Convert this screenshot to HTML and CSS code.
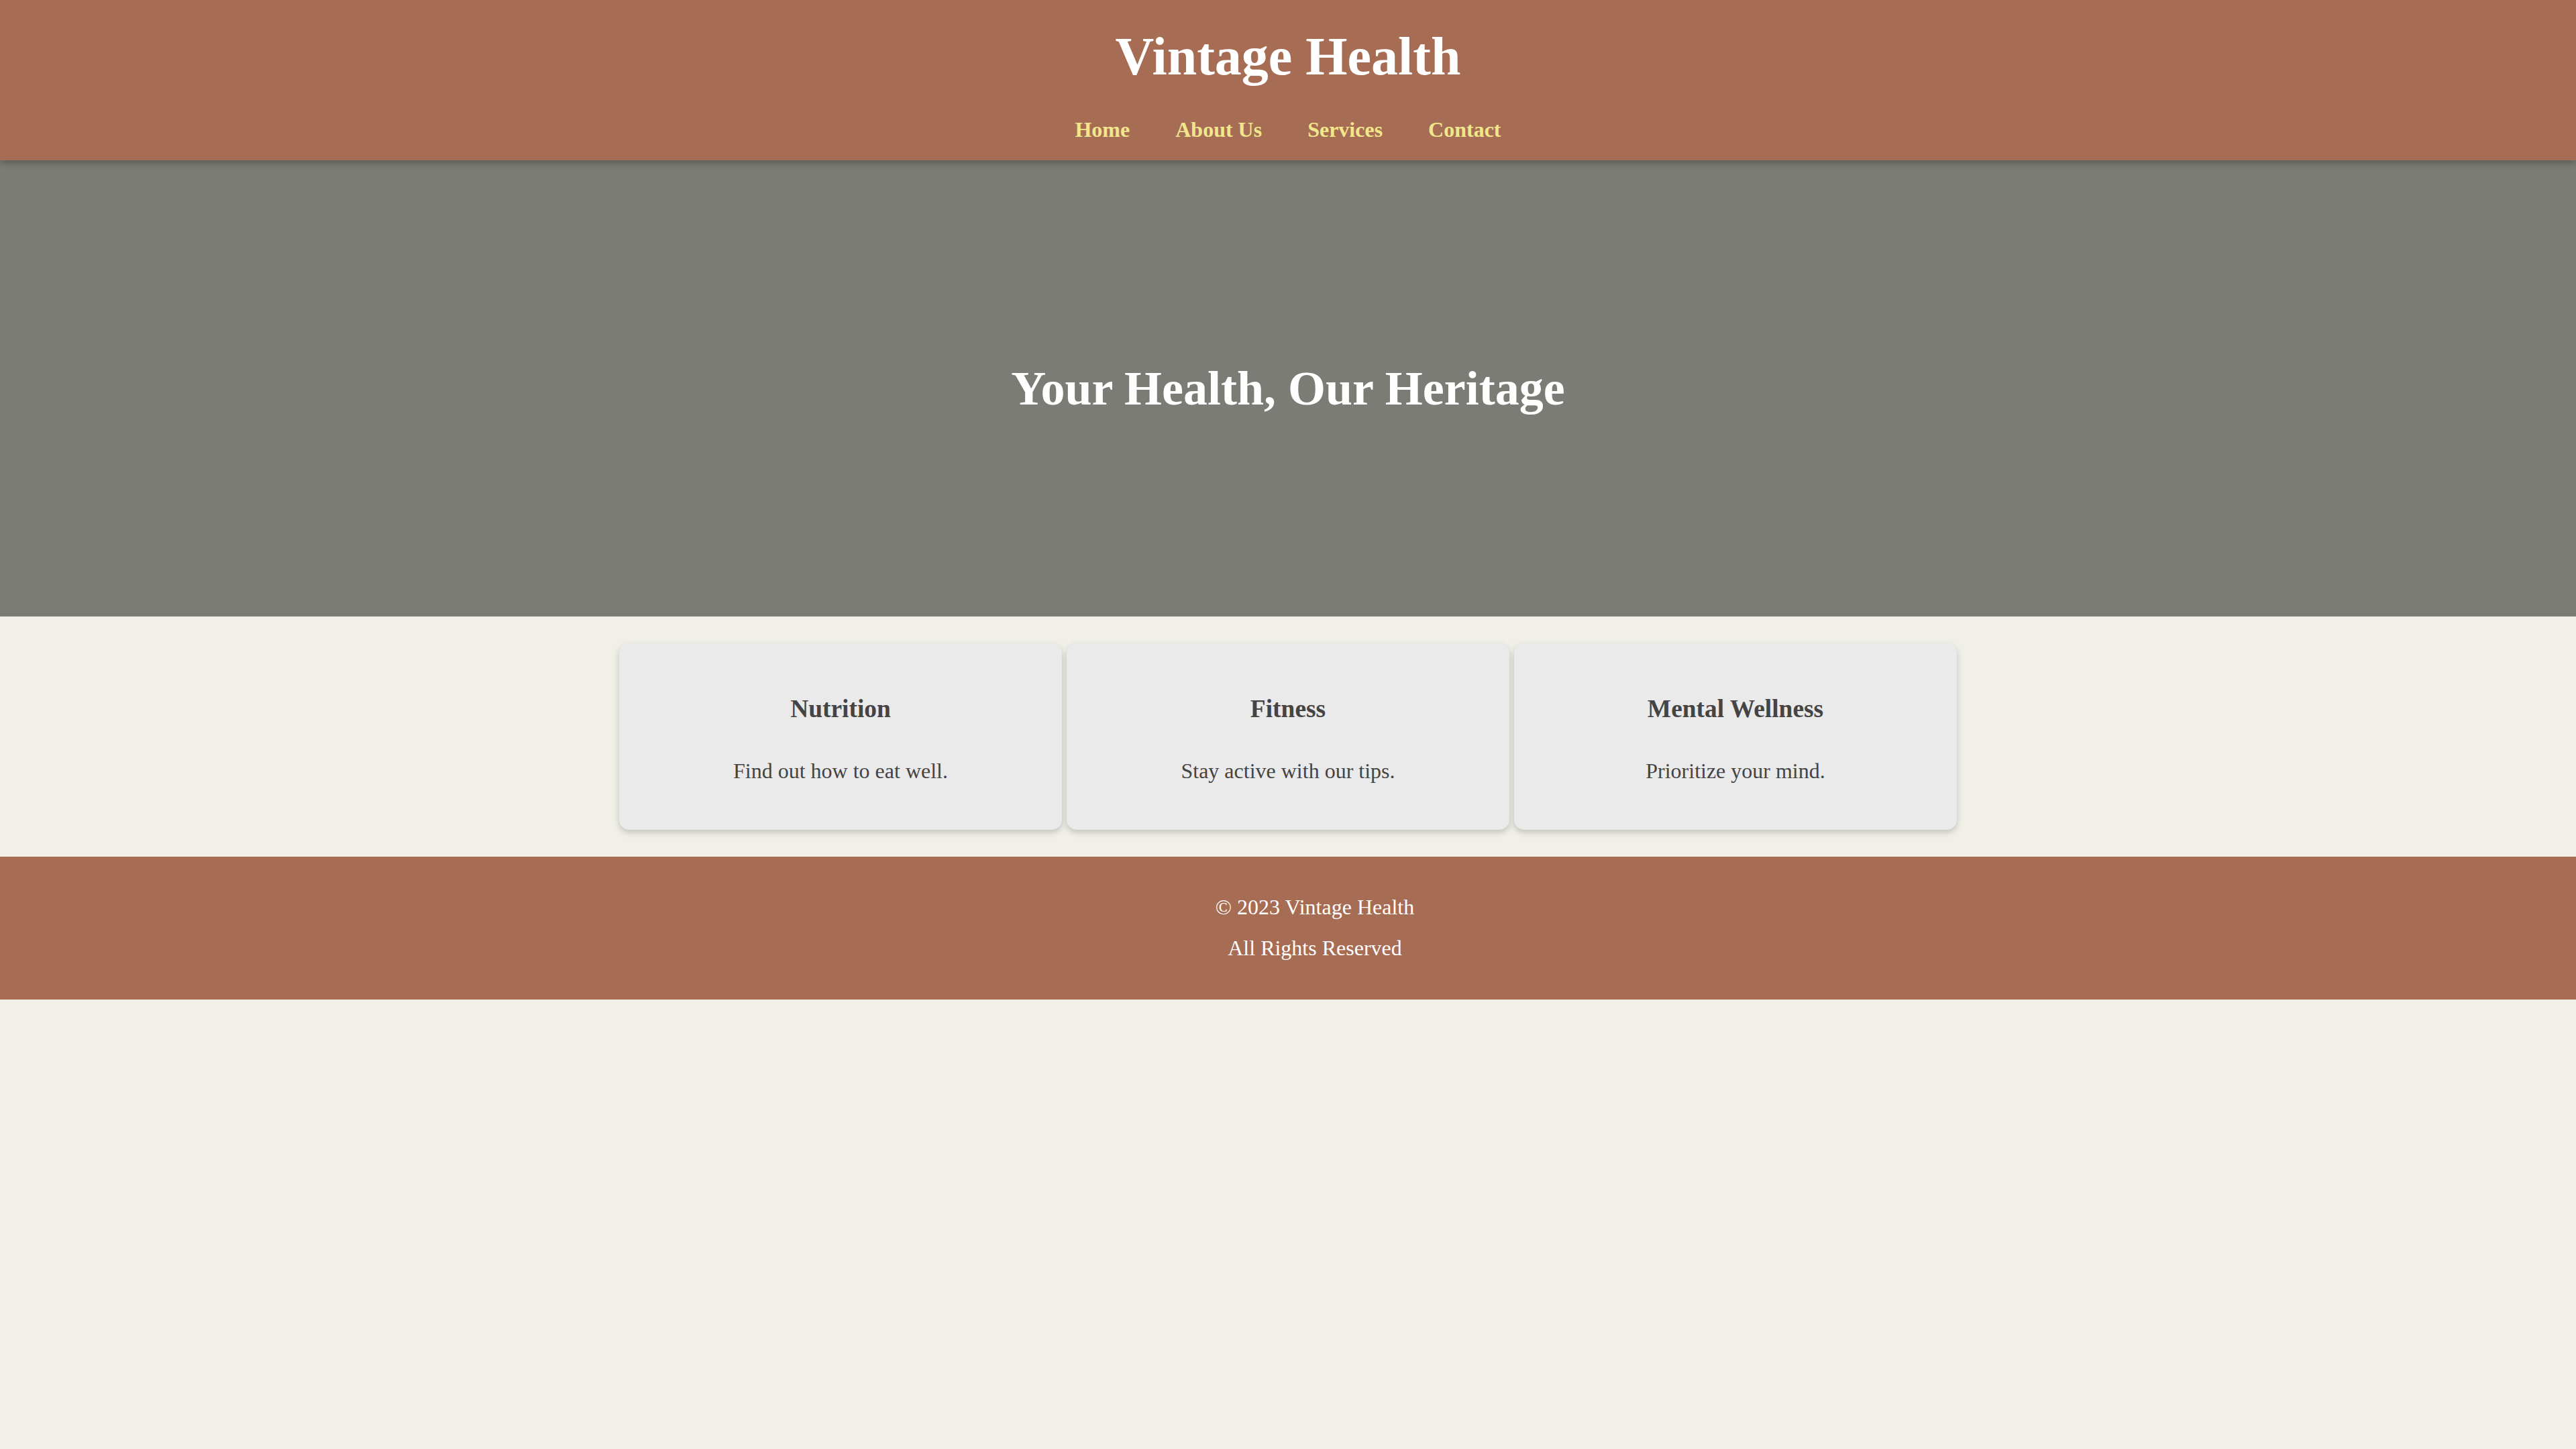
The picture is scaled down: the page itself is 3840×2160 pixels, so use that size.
FILE: index.html
```html
<!DOCTYPE html>
<html lang="en">
<head>
<meta charset="utf-8">
<title>Vintage Health</title>
<link rel="stylesheet" href="styles.css">
</head>
<body>
<header class="site-header">
  <h1 class="site-title">Vintage Health</h1>
  <nav class="main-nav">
    <a href="#" class="nav-link">Home</a>
    <a href="#" class="nav-link">About Us</a>
    <a href="#" class="nav-link">Services</a>
    <a href="#" class="nav-link">Contact</a>
  </nav>
</header>
<section class="hero">
  <h2 class="hero-title">Your Health, Our Heritage</h2>
</section>
<section class="features">
  <div class="card-row">
    <div class="card">
      <h3 class="card-title">Nutrition</h3>
      <p class="card-text">Find out how to eat well.</p>
    </div>
    <div class="card">
      <h3 class="card-title">Fitness</h3>
      <p class="card-text">Stay active with our tips.</p>
    </div>
    <div class="card">
      <h3 class="card-title">Mental Wellness</h3>
      <p class="card-text">Prioritize your mind.</p>
    </div>
  </div>
</section>
<footer class="site-footer">
  <p class="footer-line">&copy; 2023 Vintage Health</p>
  <p class="footer-line">All Rights Reserved</p>
</footer>
</body>
</html>
```

FILE: styles.css
```css
html, body {
  margin: 0;
  padding: 0;
}
body {
  background: #f1f0e8;
  font-family: "Liberation Serif", "Times New Roman", serif;
  font-size: 32px;
  line-height: 1.6;
  color: #444444;
}
.site-header {
  position: relative;
  z-index: 2;
  background: #a76c54;
  padding: 20px 0;
  text-align: center;
  box-shadow: 0 3px 10px rgba(0, 0, 0, 0.3);
}
.site-title {
  margin: 0 0 20px;
  font-size: 80px;
  font-weight: bold;
  color: #ffffff;
  line-height: 1.6;
}
.main-nav {
  display: flex;
  justify-content: center;
  gap: 68px;
}
.nav-link {
  color: #f0e68c;
  font-weight: bold;
  text-decoration: none;
  font-size: 32px;
}
.hero {
  height: 680px;
  background: #7c7c76;
  display: flex;
  align-items: center;
  justify-content: center;
}
.hero-title {
  margin: 0;
  font-size: 72px;
  font-weight: bold;
  color: #ffffff;
  line-height: 1.6;
}
.features {
  padding: 40px 0;
}
.card-row {
  width: 1994px;
  margin: 0 auto;
  display: grid;
  grid-template-columns: repeat(3, 1fr);
  gap: 7px;
}
.card {
  background: #eaeaea;
  border-radius: 15px;
  padding: 30px;
  text-align: center;
  box-shadow: 0 4px 10px rgba(0, 0, 0, 0.2);
}
.card-title {
  margin: 37.44px 0;
  font-size: 37.44px;
  font-weight: bold;
  color: #444444;
}
.card-text {
  margin: 32px 0;
  font-size: 32px;
  color: #444444;
}
.site-footer {
  background: #a76c54;
  color: #ffffff;
  text-align: center;
  padding: 40px 0 40px 80px;
}
.footer-line {
  margin: 10px 0;
}
```
